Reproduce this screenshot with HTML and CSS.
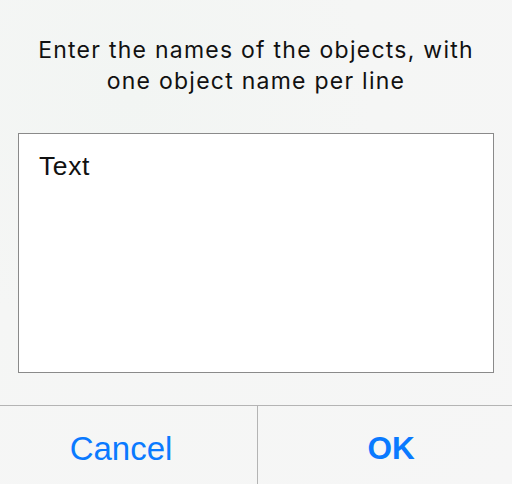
FILE: index.html
```html
<!DOCTYPE html>
<html>
<head>
<meta charset="utf-8">
<link rel="stylesheet" href="styles.css">
</head>
<body>
<div class="alert">
  <div class="message">Enter the names of the objects, with<br>one object name per line</div>
  <div class="field">Text</div>
  <div class="actions">
    <div class="btn cancel">Cancel</div>
    <div class="btn ok">OK</div>
  </div>
</div>
</body>
</html>
```
FILE: styles.css
```css
html, body {
  margin: 0;
  padding: 0;
}
body {
  width: 512px;
  height: 484px;
  overflow: hidden;
  font-family: "Liberation Sans", Arial, sans-serif;
  background: radial-gradient(ellipse at 25% 20%, #f2f5f3 0%, #f5f6f5 45%, #f6f6f6 100%);
}
.alert {
  display: flex;
  flex-direction: column;
  height: 484px;
}
.message {
  padding-top: 35px;
  text-align: center;
  font-family: Inter, "Liberation Sans", sans-serif;
  font-size: 23px;
  letter-spacing: 1.25px;
  line-height: 31px;
  color: #111;
  height: 62px;
}
.field {
  margin: 36px 18px 0 18px;
  border: 1px solid #8a8a8a;
  background: #fff;
  box-sizing: content-box;
  padding: 17px 20px 0 20px;
  height: 221px;
  font-size: 26.5px;
  letter-spacing: 0.6px;
  line-height: 30px;
  color: #111;
}
.actions {
  margin-top: 32px;
  border-top: 1px solid #b4b4b4;
  display: flex;
  flex: 1;
}
.btn {
  flex: 1;
  display: flex;
  align-items: center;
  justify-content: center;
  font-size: 33px;
  color: #0a7aff;
  padding-top: 7px;
}
.cancel {
  border-right: 1px solid #b4b4b4;
  padding-right: 15px;
}
.ok {
  font-weight: bold;
  font-size: 31.5px;
  padding-left: 12px;
}
```
